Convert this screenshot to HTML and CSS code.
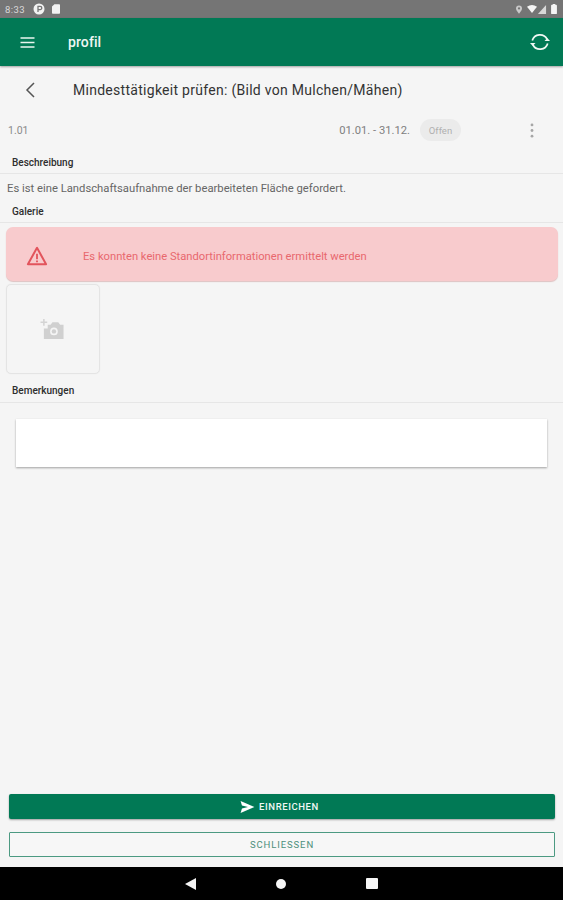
FILE: index.html
```html
<!DOCTYPE html>
<html lang="de">
<head>
<meta charset="utf-8">
<title>profil</title>
<link rel="stylesheet" href="styles.css">
</head>
<body>
<div class="app">
  <div class="statusbar">
    <div class="status-left">
      <span class="clock">8:33</span>
      <svg class="ic-p" viewBox="0 0 12 12"><circle cx="6" cy="6" r="5.500" fill="#f2f2f2"/><path d="M5 9V3.400h2.200a1.500 1.500 0 0 1 0 3.200H5" fill="none" stroke="#757575" stroke-width="1.300"/></svg>
      <svg class="ic-sd" viewBox="0 0 10 12"><path d="M3 0h6a1 1 0 0 1 1 1v10a1 1 0 0 1-1 1H1a1 1 0 0 1-1-1V3z" fill="#f2f2f2"/></svg>
    </div>
    <div class="status-right">
      <svg class="ic-loc" viewBox="0 0 8 11"><path d="M4 0a4 4 0 0 1 4 4c0 2.600-4 7-4 7S0 6.600 0 4a4 4 0 0 1 4-4z" fill="#c9c9c9"/><circle cx="4" cy="4" r="1.500" fill="#757575"/></svg>
      <svg class="ic-wifi" viewBox="0 0 14 11"><path d="M0 2.500Q7-2.500 14 2.500L7 11z" fill="#f5f5f5"/></svg>
      <svg class="ic-signal" viewBox="0 0 10 11"><path d="M10 0v11H0z" fill="#d8d8d8"/></svg>
      <svg class="ic-batt" viewBox="0 0 7 12"><path d="M2 0h3v1h1a1 1 0 0 1 1 1v9a1 1 0 0 1-1 1H1a1 1 0 0 1-1-1V2a1 1 0 0 1 1-1h1z" fill="#f5f5f5"/></svg>
    </div>
  </div>

  <header class="appbar">
    <svg class="ic-menu" viewBox="0 0 14 11"><path d="M0 1h14M0 5.500h14M0 10h14" stroke="#e9f6ef" stroke-width="1.600"/></svg>
    <span class="appbar-title">profil</span>
    <svg class="ic-sync" viewBox="0 0 22 22" fill="none" stroke="#f0f8f4" stroke-width="1.700"><path d="M3.300 9.500A8 8 0 0 1 18 8"/><path d="M18.700 12.500A8 8 0 0 1 4 14"/><path d="M15.500 10h5.500l-2.700-3z" fill="#f0f8f4" stroke="none"/><path d="M1 12h5.500l-2.800 3z" fill="#f0f8f4" stroke="none"/></svg>
  </header>

  <main class="content">
    <div class="page-head">
      <svg class="ic-back" viewBox="0 0 10 16"><path d="M9 1 2 8l7 7" fill="none" stroke="#555" stroke-width="1.500"/></svg>
      <h1 class="page-title">Mindesttätigkeit prüfen: (Bild von Mulchen/Mähen)</h1>
    </div>

    <div class="meta">
      <span class="meta-id">1.01</span>
      <span class="meta-date">01.01. - 31.12.</span>
      <span class="chip">Offen</span>
      <svg class="ic-more" viewBox="0 0 4 16"><circle cx="2" cy="2" r="1.500"/><circle cx="2" cy="8" r="1.500"/><circle cx="2" cy="14" r="1.500"/></svg>
    </div>

    <div class="section section-first">Beschreibung</div>
    <p class="desc">Es ist eine Landschaftsaufnahme der bearbeiteten Fläche gefordert.</p>
    <div class="section">Galerie</div>

    <div class="alert">
      <svg class="ic-warn" viewBox="0 0 24 22"><path d="M12 2 2 20h20z" fill="none" stroke="#e2545c" stroke-width="2.200" stroke-linejoin="round"/><path d="M12 8.500v6M12 16v2" stroke="#e2545c" stroke-width="2"/></svg>
      <span class="alert-text">Es konnten keine Standortinformationen ermittelt werden</span>
    </div>

    <div class="photo">
      <svg class="ic-cam" viewBox="0 0 26 24"><path d="M4 1v7M0.500 4.500h7" stroke="#d4d4d4" stroke-width="1.600"/><path d="M8 7h3l2-2.500h6L21 7h3.500v15H4V11h4z" fill="#d0d0d0"/><circle cx="14.500" cy="14" r="4" fill="#f5f5f5"/><circle cx="14.500" cy="14" r="2.300" fill="#d0d0d0"/></svg>
    </div>

    <div class="section section-notes">Bemerkungen</div>
    <div class="notes"></div>

    <div class="actions">
      <button class="btn btn-primary" type="button">
        <svg class="ic-send" viewBox="0 0 15 13"><path d="M0 0 15 6.500 0 13l1.500-5L8 6.500 1.500 5z" fill="#fff"/></svg>
        EINREICHEN
      </button>
      <button class="btn btn-outline" type="button">SCHLIESSEN</button>
    </div>
  </main>

  <nav class="navbar">
    <svg class="nav-back" viewBox="0 0 11 12"><path d="M11 0v12L0 6z" fill="#f4f4f4"/></svg>
    <span class="nav-home"></span>
    <span class="nav-square"></span>
  </nav>
</div>
</body>
</html>
```

FILE: styles.css
```css
* { box-sizing: border-box; }
html, body { margin: 0; padding: 0; }
body { font-family: Roboto, "Liberation Sans", sans-serif; background: #f5f5f5; }
.app { width: 563px; height: 900px; display: flex; flex-direction: column; overflow: hidden; }

.statusbar { height: 18px; flex: none; background: #757575; display: flex; justify-content: space-between; align-items: center; padding: 0 6px 0 5px; }
.status-left, .status-right { display: flex; align-items: center; }
.clock { font-size: 9.500px; color: #d8d8d8; width: 21px; letter-spacing: .4px; white-space: nowrap; }
.ic-p { width: 12px; height: 12px; margin-left: 7px; }
.ic-sd { width: 8px; height: 10px; margin-left: 7px; }
.ic-loc { width: 6px; height: 9px; margin-right: 5px; }
.ic-wifi { width: 10px; height: 8px; }
.ic-signal { width: 10px; height: 9px; margin-right: 4px; }
.ic-batt { width: 6px; height: 10px; }

.appbar { height: 48px; flex: none; background: #017955; display: flex; align-items: center; padding-left: 20px; box-shadow: 0 1px 2px rgba(0,0,0,.35); position: relative; }
.ic-menu { width: 15px; height: 11px; flex: none; }
.appbar-title { color: #eef7f3; font-size: 14px; font-weight: 500; margin-left: 33px; flex: 1; letter-spacing: .1px; }
.ic-sync { width: 22px; height: 22px; margin-right: 12px; }

.content { flex: 1; display: flex; flex-direction: column; min-height: 0; }
.page-head { height: 48px; flex: none; display: flex; align-items: center; padding-left: 25px; }
.ic-back { width: 10px; height: 16px; flex: none; }
.page-title { margin: 0 0 0 38px; font-size: 14px; font-weight: 400; color: #333; letter-spacing: .28px; white-space: nowrap; }

.meta { height: 32px; flex: none; display: flex; align-items: center; padding-left: 8px; }
.meta-id { font-size: 10.500px; color: #8a8a8a; flex: 1; }
.meta-date { font-size: 11.200px; color: #808080; }
.chip { width: 41px; height: 22px; margin-left: 10px; border-radius: 11px; background: #ebebeb; color: #b0b0b0; font-size: 9.500px; display: flex; align-items: center; justify-content: center; }
.ic-more { width: 4px; height: 15px; margin: 0 29px 0 69px; fill: #a6a6a6; }

.section { font-size: 10px; line-height: 12px; font-weight: 500; color: #2e2e2e; padding: 0 0 4px 12px; border-bottom: 1px solid #e6e6e6; flex: none; }
.section-first { margin-top: 11px; }
.desc { margin: 0; height: 32px; flex: none; padding: 8px 0 0 7px; font-size: 11.250px; line-height: 13px; color: #666; }

.alert { height: 54px; flex: none; margin: 4px 5px 0 6px; border-radius: 7px; background: #f8cbcd; display: flex; align-items: center; padding: 4px 0 0 20px; box-shadow: 0 1px 1px rgba(190,120,120,.4); }
.ic-warn { width: 22px; height: 20px; flex: none; }
.alert-text { margin-left: 35px; font-size: 11.200px; color: #e8686e; }

.photo { width: 94px; height: 90px; flex: none; margin: 3px 0 0 6px; border: 1px solid #e4e4e4; border-radius: 5px; display: flex; align-items: center; justify-content: center; box-shadow: 0 0 1px rgba(0,0,0,.1); }
.ic-cam { width: 25px; height: 23px; margin-left: -2px; }

.section-notes { margin-top: 11px; padding-bottom: 5px; }
.notes { height: 48px; flex: none; margin: 16px 16px 0; background: #fff; box-shadow: 0 1px 2px rgba(0,0,0,.35); }

.actions { margin-top: auto; padding: 0 8px 10px 9px; display: flex; flex-direction: column; gap: 13px; }
.btn { height: 25px; width: 100%; border-radius: 2px; font-family: inherit; font-size: 9.500px; display: flex; align-items: center; justify-content: center; padding: 0; }
.btn-primary { border: 0; padding-right: 5px; background: #017955; color: #f0f8f4; font-weight: 500; letter-spacing: .6px; box-shadow: 0 1px 2px rgba(0,0,0,.35); }
.ic-send { width: 15px; height: 12px; margin-right: 4px; }
.btn-outline { background: #f7f7f7; border: 1px solid #4c9a82; color: #4c8f7b; letter-spacing: .9px; border-radius: 1px; }

.navbar { height: 33px; flex: none; background: #000; display: flex; align-items: center; justify-content: center; }
.nav-back { width: 11px; height: 12px; margin-right: 80px; }
.nav-home { width: 10px; height: 10px; border-radius: 50%; background: #f6f6f6; margin-right: 80px; }
.nav-square { width: 12px; height: 11px; border-radius: 1px; background: #f6f6f6; }
```
